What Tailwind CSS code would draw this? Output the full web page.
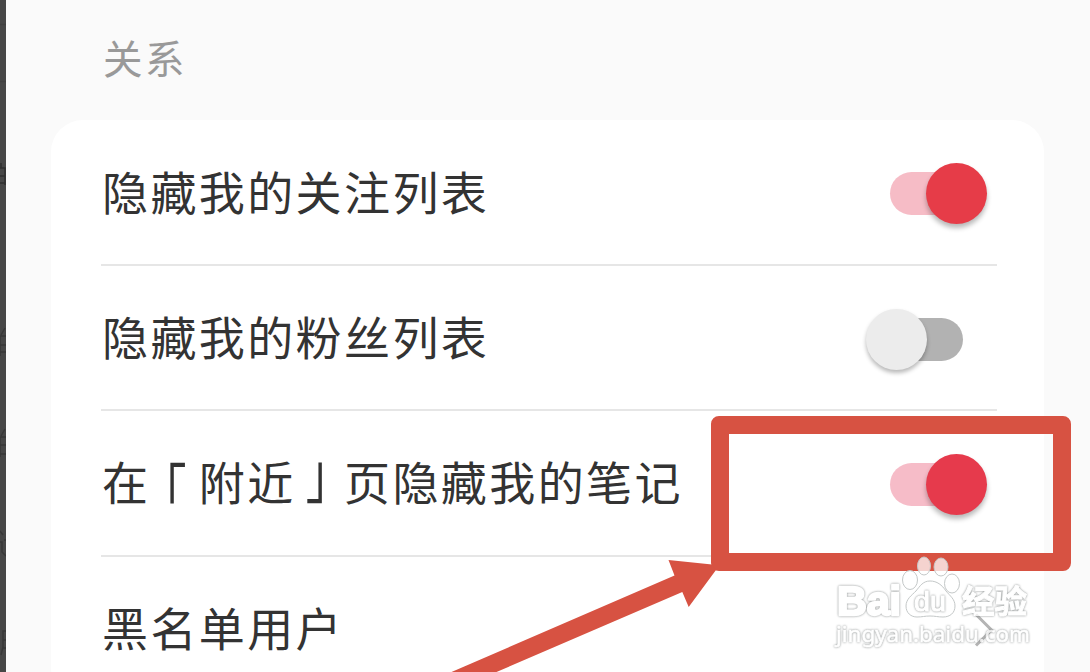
<!doctype html>
<html lang="zh-CN">
  <head>
    <meta charset="UTF-8" />
    <meta name="viewport" content="width=device-width, initial-scale=1.0" />
    <title>关系</title>
    <script src="https://cdn.jsdelivr.net/npm/@tailwindcss/browser@4"></script>
  </head>
  <body class="bg-[#fafafa] font-['Noto_Sans_CJK_SC',sans-serif]">
    <div class="relative flex h-[672px] w-[1090px] overflow-hidden">
      <!-- page behind the panel -->
      <div class="relative w-[6px] shrink-0 overflow-hidden bg-[#474747]">
        <svg class="h-[672px] w-[6px]" viewBox="0 0 6 672" fill="none" stroke="#303030" stroke-width="1.5">
          <path d="M0 24.5h6M0 81.5h6" stroke="#404040" />
          <path d="M1 163v5M0 168h5v17M0 176h5M0 183h5" />
          <path d="M5 328l-4 7M0 336h6M0 345h6M0 352h6M0 336v20" stroke="#383838" />
          <path d="M5 429l-4 7M0 437h6M0 445h6M0 454h6M0 437v20" stroke="#383838" />
          <path d="M0 531l3 4M0 542h2v10l4 4M4 540h2" stroke="#383838" />
          <path d="M1 655l2-8V631h3M3 640h3M3 648h3" stroke="#383838" />
        </svg>
      </div>

      <main class="flex-1 pl-[45px] pr-[46px]">
        <h1 class="h-[120px] pl-[52px] pt-[27px] text-[39.5px] leading-[60px] tracking-[2.5px] text-[#999999]">关系</h1>

        <ul class="h-[580px] rounded-[32px] bg-white pl-[50px] pr-[47px] text-[46px] tracking-[2.4px] text-[#333333]">
          <li class="flex h-[146px] items-center justify-between border-b-2 border-[#e6e6e6] pl-px pr-[34px]">
            <span class="pb-[3px]">隐藏我的关注列表</span>
            <div class="relative mt-[3px] h-[43px] w-[73px] rounded-full bg-[#f6bcc6]">
              <div class="absolute -right-6 -top-[9px] size-[61px] rounded-full bg-[#e63c48] shadow-[0_4px_5px_rgba(0,0,0,0.28)]"></div>
            </div>
          </li>
          <li class="flex h-[145px] items-center justify-between border-b-2 border-[#e6e6e6] pl-px pr-[34px]">
            <span class="pb-[5px]">隐藏我的粉丝列表</span>
            <div class="relative mt-[3px] h-[43px] w-[73px] rounded-full bg-[#b2b2b2]">
              <div class="absolute -left-6 -top-[9px] size-[61px] rounded-full bg-[#ececec] shadow-[0_3px_4px_rgba(0,0,0,0.28)]"></div>
            </div>
          </li>
          <li class="flex h-[146px] items-center justify-between border-b-2 border-[#e6e6e6] pl-px pr-[34px]">
            <span class="flex pb-[5px]"><span>在</span><span class="-translate-x-[10px] translate-y-[9px] scale-y-[1.35]">「</span><span>附近</span><span class="translate-x-[10px] -translate-y-[9px] scale-y-[1.35]">」</span><span>页隐藏我的笔记</span></span>
            <div class="relative mt-[3px] h-[43px] w-[73px] rounded-full bg-[#f6bcc8]">
              <div class="absolute -right-6 -top-[9px] size-[61px] rounded-full bg-[#e63a4c] shadow-[0_4px_5px_rgba(0,0,0,0.28)]"></div>
            </div>
          </li>
          <li class="flex h-[145px] items-center justify-between pl-px pr-[3px]">
            <span class="pb-[7px]">黑名单用户</span>
            <svg class="h-[34px] w-[20px]" viewBox="0 0 20 34" fill="none" stroke="#b4b4b4" stroke-width="3">
              <path d="M2 1.5 17.5 17 2 32.5" />
            </svg>
          </li>
        </ul>
      </main>

      <!-- highlight box and arrow -->
      <div class="absolute left-[711px] top-[416px] h-[155px] w-[360px] rounded-[8px] border-[18px] border-[#d75242]"></div>
      <svg class="absolute left-0 top-0 h-[672px] w-[1090px]" viewBox="0 0 1090 672">
        <path d="M451.5 672 674.5 575.5 668.5 560 712 564.5 716 570 688.7 607 682.3 592 496.5 672z" fill="#d75242" />
      </svg>

      <!-- watermark -->
      <svg class="absolute left-[830px] top-[550px] h-[105px] w-[210px]" viewBox="830 550 210 105" fill="#ffffff">
        <g fill-opacity="0.75" stroke="#c4c8c8" stroke-width="1">
          <ellipse cx="910" cy="580" rx="7.5" ry="9.5" />
          <ellipse cx="924" cy="566" rx="6.5" ry="9" />
          <ellipse cx="941" cy="567" rx="7" ry="9" />
          <ellipse cx="952" cy="583.5" rx="7.5" ry="9.5" />
          <path d="M930 581c-7 0-10 5-14 10-4 4-10 8-10 15s5 11 11 11c5 0 8-1 13-1s8 1 13 1c7 0 12-4 12-11s-5-10-9-15c-4-6-9-10-16-10z" />
        </g>
        <g class="drop-shadow-[0_0_0.8px_#636969]" stroke="#ffffff" stroke-linejoin="round" opacity="0.75">
          <text x="837" y="615" textLength="64" lengthAdjust="spacingAndGlyphs" font-family="Liberation Sans" font-weight="700" font-size="41" stroke-width="2.5">Bai</text>
          <text x="914" y="611" textLength="32" lengthAdjust="spacingAndGlyphs" font-family="Liberation Sans" font-size="27" stroke-width="1">du</text>
          <text x="962" y="613" textLength="65" lengthAdjust="spacingAndGlyphs" font-family="Noto Sans CJK SC" font-weight="700" font-size="32" stroke-width="1">经验</text>
          <text x="836" y="642" textLength="194" lengthAdjust="spacingAndGlyphs" font-family="Noto Sans" font-size="22" stroke-width="0.6">jingyan.baidu.com</text>
        </g>
      </svg>
    </div>
  </body>
</html>
